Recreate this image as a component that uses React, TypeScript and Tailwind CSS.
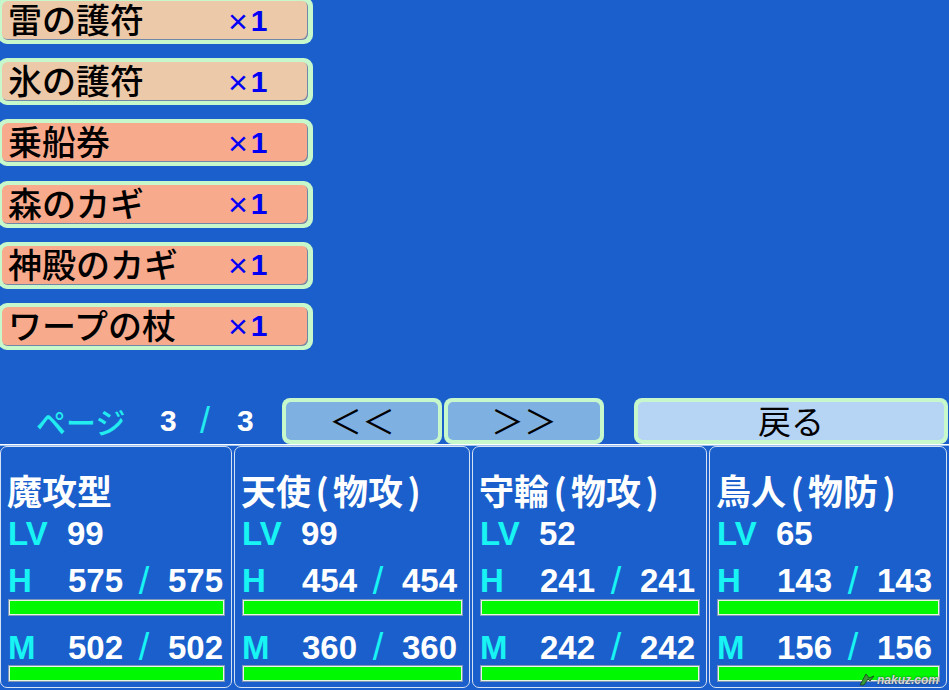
import React from "react";

const items = [
  { name: "雷の護符", tan: true },
  { name: "氷の護符", tan: true },
  { name: "乗船券", tan: false },
  { name: "森のカギ", tan: false },
  { name: "神殿のカギ", tan: false },
  { name: "ワープの杖", tan: false },
];

const members = [
  { name: ["魔攻型"], lv: 99, h: 575, m: 502 },
  { name: ["天使", "物攻"], lv: 99, h: 454, m: 360 },
  { name: ["守輪", "物攻"], lv: 52, h: 241, m: 242 },
  { name: ["鳥人", "物防"], lv: 65, h: 143, m: 156 },
];

const jp = { fontFamily: '"Noto Sans CJK JP", "Noto Sans", sans-serif' };
const lat = { fontFamily: '"Liberation Sans", Arial, sans-serif' };

function Item({ name, tan }: { name: string; tan: boolean }) {
  return (
    <div className="h-[47px] w-[315px] -ml-[2px] rounded-[9px] bg-[#c6f8cc] p-[4px] pr-[5px]">
      <div
        className={
          "h-full w-full rounded-[6px] flex items-center pl-[6px] shadow-[inset_-1px_-1px_0_#7088a8] " +
          (tan ? "bg-[#ecc9a9]" : "bg-[#f8aa8c]")
        }
      >
        <span className="w-[220px] text-[34px] leading-[34px] font-medium text-black pb-[3px]" style={jp}>
          {name}
        </span>
        <span className="text-[34px] leading-none text-[#0000f4]" style={lat}>
          ×
        </span>
        <span className="ml-[3px] text-[30px] leading-none font-bold text-[#0000f4]" style={lat}>
          1
        </span>
      </div>
    </div>
  );
}

function NavButton({ label, w, light }: { label: string; w: string; light?: boolean }) {
  return (
    <div className={"h-[46px] rounded-[8px] bg-[#c6f8cc] p-[4px] " + w}>
      <div
        className={
          "h-full w-full rounded-[5px] flex items-center justify-center text-[33px] leading-none text-black " +
          (light ? "bg-[#b6d4f4]" : "bg-[#7eb0e2]")
        }
        style={jp}
      >
        {label}
      </div>
    </div>
  );
}

function Bar() {
  return (
    <div className="h-[15px] ml-[8px] mr-[7px] border border-[#e8f4e8] shadow-[0_0_0_1px_#8098b8] bg-[#00f800]" />
  );
}

function Slash() {
  return (
    <span className="w-[42px] text-center text-[#18f4f4] font-normal text-[38px]" style={lat}>
      /
    </span>
  );
}

function Panel({ m }: { m: (typeof members)[number] }) {
  return (
    <div className="h-[242px] rounded-[7px] border-[1.5px] border-[#d4e2f4] bg-[#1a5fcb] pt-[22px]">
      <div className="h-[42px] pl-[6px] flex items-center text-white font-bold text-[35px] leading-none" style={jp}>
        {m.name.length === 1 ? (
          m.name[0]
        ) : (
          <>
            {m.name[0]}
            <span className="inline-block w-[22px] text-center">(</span>
            {m.name[1]}
            <span className="inline-block w-[22px] text-center">)</span>
          </>
        )}
      </div>
      <div className="h-[46px] pl-[7px] flex items-center font-bold text-[33px] leading-none" style={lat}>
        <span className="w-[59px] text-[#18f4f4]">LV</span>
        <span className="text-white">{m.lv}</span>
      </div>
      <div className="h-[43px] pt-[6px] pl-[7px] flex font-bold text-[33px] leading-[36px]" style={lat}>
        <span className="w-[57px] text-[#18f4f4]">H</span>
        <span className="w-[58px] text-right text-white">{m.h}</span>
        <Slash />
        <span className="w-[58px] text-right text-white">{m.h}</span>
      </div>
      <Bar />
      <div className="h-[51px] pt-[14px] pl-[7px] flex font-bold text-[33px] leading-[37px]" style={lat}>
        <span className="w-[57px] text-[#18f4f4]">M</span>
        <span className="w-[58px] text-right text-white">{m.m}</span>
        <Slash />
        <span className="w-[58px] text-right text-white">{m.m}</span>
      </div>
      <Bar />
    </div>
  );
}

export default function App() {
  return (
    <div className="relative w-[949px] h-[690px] overflow-hidden bg-[#1a5fcb]">
      <div className="-mt-[3px] flex flex-col gap-[14.2px]">
        {items.map((it) => (
          <Item key={it.name} name={it.name} tan={it.tan} />
        ))}
      </div>
      <div className="mt-[48px] h-[46px] flex items-center">
        <span className="ml-[36px] w-[124px] text-[30px] leading-none font-medium text-[#22ecf0]" style={jp}>
          ページ
        </span>
        <span className="w-[40px] text-[30px] font-bold text-white leading-none" style={lat}>3</span>
        <span className="w-[37px] text-[36px] text-[#22ecf0] leading-none" style={lat}>/</span>
        <span className="w-[45px] text-[30px] font-bold text-white leading-none" style={lat}>3</span>
        <NavButton label="＜＜" w="w-[160px]" />
        <div className="w-[2px]" />
        <NavButton label="＞＞" w="w-[160px]" />
        <div className="w-[30px]" />
        <NavButton label="戻る" w="w-[314px]" light />
      </div>
      <div className="h-[2px] border-t border-white bg-[#9cc0f0]" />
      <div className="grid grid-cols-[232px_236px_235px_238px] gap-[2px]">
        {members.map((m, i) => (
          <Panel key={i} m={m} />
        ))}
      </div>
      <div className="absolute right-[10px] bottom-[4px] flex items-end gap-[2px]">
        <svg width="16" height="14" viewBox="0 0 16 14">
          <path d="M1 13 L7 2 L10 6 L15 4 L11 9 L9 7 L5 13 Z" fill="#3a9a3a" stroke="#1a3a1a" strokeWidth="0.8" />
        </svg>
        <span
          className="text-[12px] font-bold italic leading-none text-[#d8d8d8] [text-shadow:0_0_2px_#203040]"
          style={lat}
        >
          nakuz.com
        </span>
      </div>
    </div>
  );
}
